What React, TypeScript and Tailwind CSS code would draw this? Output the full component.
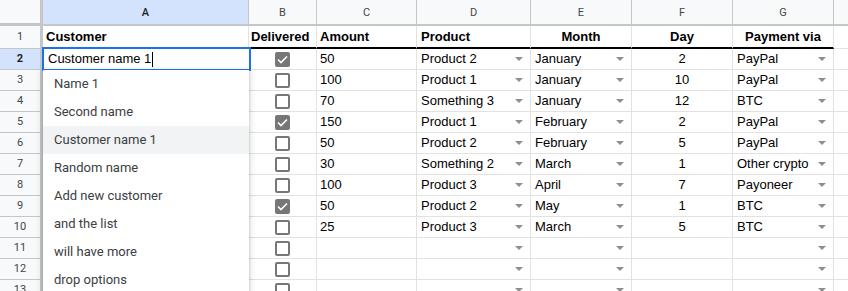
import React from 'react'

type Row = {
  n: number
  done: boolean
  amount: string
  product: string
  month: string
  day: string
  via: string
}

const rows: Row[] = [
  { n: 2, done: true, amount: '50', product: 'Product 2', month: 'January', day: '2', via: 'PayPal' },
  { n: 3, done: false, amount: '100', product: 'Product 1', month: 'January', day: '10', via: 'PayPal' },
  { n: 4, done: false, amount: '70', product: 'Something 3', month: 'January', day: '12', via: 'BTC' },
  { n: 5, done: true, amount: '150', product: 'Product 1', month: 'February', day: '2', via: 'PayPal' },
  { n: 6, done: false, amount: '50', product: 'Product 2', month: 'February', day: '5', via: 'PayPal' },
  { n: 7, done: false, amount: '30', product: 'Something 2', month: 'March', day: '1', via: 'Other crypto' },
  { n: 8, done: false, amount: '100', product: 'Product 3', month: 'April', day: '7', via: 'Payoneer' },
  { n: 9, done: true, amount: '50', product: 'Product 2', month: 'May', day: '1', via: 'BTC' },
  { n: 10, done: false, amount: '25', product: 'Product 3', month: 'March', day: '5', via: 'BTC' },
  { n: 11, done: false, amount: '', product: '', month: '', day: '', via: '' },
  { n: 12, done: false, amount: '', product: '', month: '', day: '', via: '' },
  { n: 13, done: false, amount: '', product: '', month: '', day: '', via: '' },
]

const options = [
  'Name 1',
  'Second name',
  'Customer name 1',
  'Random name',
  'Add new customer',
  'and the list',
  'will have more',
  'drop options',
]

const cell = 'h-full shrink-0 border-r border-b border-[#e2e2e2] flex items-center'
const letter = 'shrink-0 h-full bg-[#f8f9fa] border-r border-b-2 border-[#c4c7c5] flex items-center justify-center pt-[2px]'

function Arrow() {
  return (
    <svg className="ml-auto mr-[7px] shrink-0" width="8" height="4" viewBox="0 0 8 4">
      <path d="M0 0h8L4 4z" fill="#8e8e8e" />
    </svg>
  )
}

function Checkbox({ checked }: { checked: boolean }) {
  if (checked) {
    return (
      <div className="w-[15px] h-[15px] rounded-[2px] bg-[#777777] flex items-center justify-center">
        <svg width="11" height="9" viewBox="0 0 11 9">
          <path d="M1 4.5l3 3L10 1.5" stroke="#fff" strokeWidth="1.6" fill="none" />
        </svg>
      </div>
    )
  }
  return <div className="w-[15px] h-[15px] rounded-[2px] border-2 border-[#777777] bg-white" />
}

export default function App() {
  return (
    <div className="relative w-[848px] h-[291px] overflow-hidden bg-white text-[13px] text-black font-['Liberation_Sans',Arial,sans-serif]">
      {/* column letters */}
      <div className="flex h-[26px] text-[11px] text-[#444746] font-['Roboto',sans-serif]">
        <div className="w-[43px] shrink-0 h-full bg-[#f8f9fa] border-r-[3px] border-b-[3px] border-[#c4c7c5]" />
        <div className="w-[206px] shrink-0 h-full bg-[#d3e3fd] border-r border-b-2 border-[#c4c7c5] flex items-center justify-center pt-[2px] text-[#1f1f1f] font-medium">A</div>
        <div className={`${letter} w-[68px]`}>B</div>
        <div className={`${letter} w-[100px]`}>C</div>
        <div className={`${letter} w-[114px]`}>D</div>
        <div className={`${letter} w-[101px]`}>E</div>
        <div className={`${letter} w-[101px]`}>F</div>
        <div className={`${letter} w-[101px]`}>G</div>
        <div className="flex-1 h-full bg-[#f8f9fa] border-b-2 border-[#c4c7c5]" />
      </div>

      {/* row 1: titles */}
      <div className="flex h-[23px] font-bold">
        <div className="w-[43px] shrink-0 h-full bg-[#f8f9fa] border-r-[3px] border-b border-[#c4c7c5] flex items-center justify-center text-[11px] font-normal text-[#444746] font-['Roboto',sans-serif]">1</div>
        <div className="w-[206px] shrink-0 h-full border-r border-[#e2e2e2] border-b-2 border-b-black flex items-center pl-[3px]">Customer</div>
        <div className="w-[68px] shrink-0 h-full border-r border-[#e2e2e2] border-b-2 border-b-black flex items-center pl-[2px]">Delivered</div>
        <div className="w-[100px] shrink-0 h-full border-r border-[#e2e2e2] border-b-2 border-b-black flex items-center pl-[3px]">Amount</div>
        <div className="w-[114px] shrink-0 h-full border-r border-[#e2e2e2] border-b-2 border-b-black flex items-center pl-[4px]">Product</div>
        <div className="w-[101px] shrink-0 h-full border-r border-[#e2e2e2] border-b-2 border-b-black flex items-center justify-center">Month</div>
        <div className="w-[101px] shrink-0 h-full border-r border-[#e2e2e2] border-b-2 border-b-black flex items-center justify-center">Day</div>
        <div className="w-[101px] shrink-0 h-full border-r border-[#e2e2e2] border-b-2 border-b-black flex items-center justify-center">Payment via</div>
        <div className="flex-1 h-full border-b border-[#e2e2e2]" />
      </div>

      {rows.map((r) => (
        <div key={r.n} className="flex h-[21px]">
          <div
            className={`w-[43px] shrink-0 h-full border-r-[3px] border-b border-[#c4c7c5] flex items-center justify-center text-[11px] font-['Roboto',sans-serif] ${
              r.n === 2 ? 'bg-[#d3e3fd] text-[#1f1f1f] font-bold' : 'bg-[#f8f9fa] text-[#444746]'
            }`}
          >
            {r.n}
          </div>
          <div className={`${cell} w-[206px]`} />
          <div className={`${cell} w-[68px] justify-center`}>
            <Checkbox checked={r.done} />
          </div>
          <div className={`${cell} w-[100px] pl-[3px]`}>{r.amount}</div>
          <div className={`${cell} w-[114px] pl-[4px]`}>
            <span>{r.product}</span>
            <Arrow />
          </div>
          <div className={`${cell} w-[101px] pl-[4px]`}>
            <span>{r.month}</span>
            <Arrow />
          </div>
          <div className={`${cell} w-[101px] justify-center`}>{r.day}</div>
          <div className={`${cell} w-[101px] pl-[4px]`}>
            <span className="whitespace-nowrap">{r.via}</span>
            <Arrow />
          </div>
          <div className="flex-1 h-full border-b border-[#e2e2e2]" />
        </div>
      ))}

      {/* fill handle */}
      <div className="absolute left-[246px] top-[66px] w-[6px] h-[6px] bg-[#1a73e8] border border-white" />

      {/* active cell editor */}
      <div className="absolute left-[42px] top-[47px] w-[209px] h-[24px] border-2 border-[#1a73e8] bg-white flex items-center pl-[4px]">
        <span>Customer name 1</span>
        <span className="inline-block w-px h-[15px] bg-black ml-[1px]" />
      </div>

      {/* autocomplete list */}
      <div className="absolute left-[43px] top-[70px] w-[206px] h-[240px] bg-white shadow-[0_2px_6px_2px_rgba(60,64,67,0.15),0_1px_2px_rgba(60,64,67,0.3)] font-['Roboto',sans-serif] text-[13px] text-[#3c4043]">
        {options.map((o) => (
          <div
            key={o}
            className={`h-[28px] flex items-center pl-[11px] ${o === 'Customer name 1' ? 'bg-[#f1f3f4]' : ''}`}
          >
            {o}
          </div>
        ))}
      </div>
    </div>
  )
}
